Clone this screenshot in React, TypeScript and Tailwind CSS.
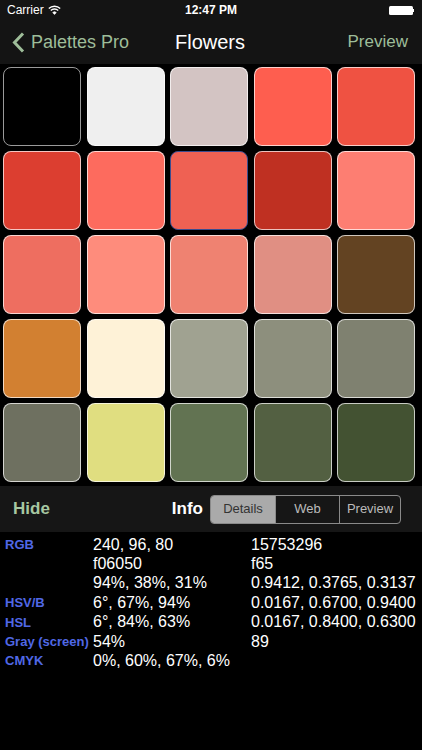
import React from "react";

const colors: string[] = [
  "#000000", "#efefef", "#d3c4c3", "#fe5e4f", "#ef5242",
  "#dc3e30", "#fd6b5e", "#ef6153", "#bf3022", "#fd7e72",
  "#ee6e60", "#fe8c7c", "#ef8271", "#e08f83", "#634322",
  "#d28031", "#fef2d7", "#a0a291", "#8d8f7d", "#7f8170",
  "#6e7060", "#e0de80", "#627352", "#536042", "#435232",
];

const rows: [string, string, string][] = [
  ["RGB", "240, 96, 80", "15753296"],
  ["", "f06050", "f65"],
  ["", "94%, 38%, 31%", "0.9412, 0.3765, 0.3137"],
  ["HSV/B", "6°, 67%, 94%", "0.0167, 0.6700, 0.9400"],
  ["HSL", "6°, 84%, 63%", "0.0167, 0.8400, 0.6300"],
  ["Gray (screen)", "54%", "89"],
  ["CMYK", "0%, 60%, 67%, 6%", ""],
];

export default function App() {
  return (
    <div
      className="w-[422px] h-[750px] bg-black text-white overflow-hidden flex flex-col"
      style={{ fontFamily: '"Liberation Sans", Arial, sans-serif' }}
    >
      {/* status + nav */}
      <div className="bg-[#141414] h-[64px] flex flex-col">
        <div className="h-[20px] flex items-center justify-between px-[7px] text-[12px]">
          <div className="flex items-center gap-[4px] w-[120px]">
            <span>Carrier</span>
            <svg width="13" height="10" viewBox="0 0 13 10">
              <path d="M0.8 3.6 A8 8 0 0 1 12.2 3.6" stroke="white" strokeWidth="1.4" fill="none" />
              <path d="M2.8 5.6 A5.2 5.2 0 0 1 10.2 5.6" stroke="white" strokeWidth="1.4" fill="none" />
              <path d="M4.8 7.5 A2.5 2.5 0 0 1 8.2 7.5 L6.5 9.4 Z" fill="white" stroke="white" strokeWidth="0.8" />
            </svg>
          </div>
          <span className="font-bold">12:47 PM</span>
          <div className="w-[120px] flex justify-end pr-[1px]">
            <div className="flex items-center">
              <div className="w-[24px] h-[9px] bg-white rounded-[1.5px]" />
              <div className="w-[1.5px] h-[3px] bg-white" />
            </div>
          </div>
        </div>
        <div className="flex-1 flex items-center justify-between pl-[12px] pr-[14px]">
          <div className="flex items-center gap-[6px] w-[140px] text-[#9ebd99] text-[18px]">
            <svg width="13" height="21" viewBox="0 0 13 21">
              <path d="M11 1.5 L2.5 10.5 L11 19.5" stroke="#9ebd99" strokeWidth="3" fill="none" />
            </svg>
            <span>Palettes Pro</span>
          </div>
          <span className="text-[20px]">Flowers</span>
          <div className="w-[140px] text-right text-[17px] text-[#9ebd99]">Preview</div>
        </div>
      </div>

      {/* grid */}
      <div className="h-[422px] pt-[3px] pl-[3px]">
        <div className="grid grid-cols-5 w-[412px] gap-x-[5.5px] gap-y-[5px]">
          {colors.map((c, i) => (
            <div
              key={i}
              className={
                "h-[79px] rounded-[8px] border " +
                (i === 7
                  ? "border-[#3b4c8e]"
                  : i === 0
                  ? "border-[#9a9a9a]"
                  : "border-white/70")
              }
              style={{ backgroundColor: c }}
            />
          ))}
        </div>
      </div>

      {/* toolbar */}
      <div className="bg-[#161616] h-[46px] flex items-center pl-[13px] pr-[21px]">
        <span className="text-[#a7c8a2] text-[17px] font-bold flex-1">Hide</span>
        <span className="text-[17px] font-bold mr-[7px]">Info</span>
        <div className="flex h-[29px] w-[191px] border border-[#8a8a8a] rounded-[4px] overflow-hidden text-[13px]">
          <div className="w-[64px] bg-[#aaaaaa] text-[#333] flex items-center justify-center">Details</div>
          <div className="w-[64px] border-l border-[#8a8a8a] text-[#bbbbbb] flex items-center justify-center">Web</div>
          <div className="flex-1 border-l border-[#8a8a8a] text-[#bbbbbb] flex items-center justify-center">Preview</div>
        </div>
      </div>

      {/* info */}
      <div className="pt-[3px] pl-[5px]">
        {rows.map((r, i) => (
          <div key={i} className="flex items-center h-[19.4px]">
            <span className="w-[88px] text-[13px] font-bold text-[#5068e6]">{r[0]}</span>
            <span className="w-[158px] text-[16px]">{r[1]}</span>
            <span className="text-[16px]">{r[2]}</span>
          </div>
        ))}
      </div>
    </div>
  );
}
